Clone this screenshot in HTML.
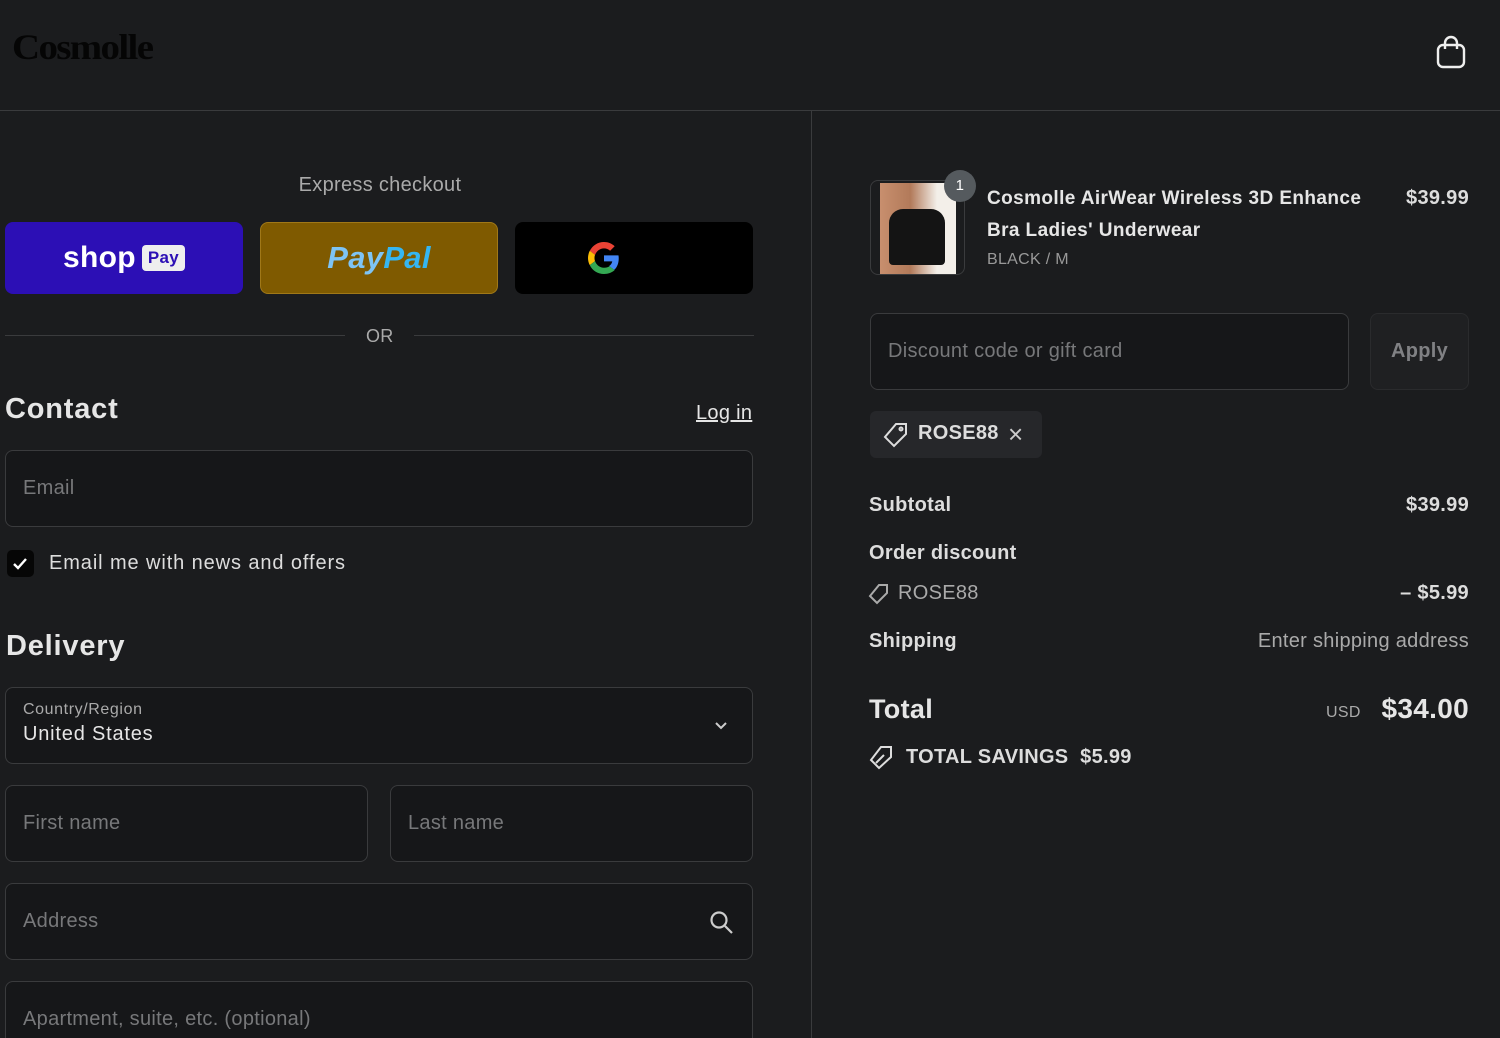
<!DOCTYPE html>
<html style="overflow:hidden;height:1038px"><head><meta charset="utf-8"><style>
*{box-sizing:border-box;margin:0;padding:0}
body{width:1500px;height:1038px;overflow:hidden;background:#1b1c1e;font-family:"Liberation Sans",sans-serif;color:#e6e6e6;position:relative;letter-spacing:.3px}
.a{position:absolute}
.r{position:absolute;right:31px;text-align:right}
.inp{position:absolute;border:1px solid #3a3b3d;border-radius:8px;background:#161719;color:#77787a;font-size:20px;padding-left:17px;display:flex;align-items:center}
.lbl{font-size:20px;color:#ddd}
</style></head><body>
<div class="a" style="left:12px;top:26px;font-family:'Liberation Serif',serif;font-weight:bold;font-size:36px;color:#050505;letter-spacing:-1.5px;transform:scaleX(1.08);transform-origin:left">Cosmolle</div>
<svg class="a" style="left:1435px;top:34px" width="32" height="36" viewBox="0 0 32 36" fill="none" stroke="#eee" stroke-width="2.4"><rect x="3" y="11" width="26" height="22" rx="5"/><path d="M10 15V9a6 6 0 0112 0v6"/></svg>
<div class="a" style="left:0;top:110px;width:1500px;height:1px;background:#3a3b3d"></div>
<div class="a" style="left:811px;top:111px;width:1px;height:927px;background:#3a3b3d"></div>

<div class="a" style="left:0;width:760px;top:174px;text-align:center;font-size:20px;color:#aaa">Express checkout</div>
<div class="a" style="left:5px;top:222px;width:238px;height:72px;background:#2c0fb5;border-radius:8px;display:flex;align-items:center;justify-content:center;gap:6px"><span style="color:#fff;font-weight:bold;font-size:30px">shop</span><span style="background:#eee;color:#2c0fb5;font-weight:bold;font-size:17px;padding:3px 6px;border-radius:4px">Pay</span></div>
<div class="a" style="left:260px;top:222px;width:238px;height:72px;background:#7f5a00;border:1px solid #a07818;border-radius:8px;display:flex;align-items:center;justify-content:center;font-style:italic;font-weight:bold;font-size:31px"><span style="color:#7ec4f5">Pay</span><span style="color:#35b6f2">Pal</span></div>
<div class="a" style="left:515px;top:222px;width:238px;height:72px;background:#000;border-radius:8px"></div>
<svg class="a" style="left:588px;top:242px" width="32" height="32" viewBox="0 0 48 48"><path fill="#EA4335" d="M24 9.5c3.5 0 6.7 1.2 9.2 3.6l6.8-6.8C35.9 2.4 30.5 0 24 0 14.6 0 6.6 5.4 2.7 13.3l7.9 6.2C12.5 13.6 17.8 9.5 24 9.5z"/><path fill="#4285F4" d="M46.1 24.5c0-1.6-.1-3.1-.4-4.5H24v9h12.4c-.5 2.9-2.2 5.4-4.7 7l7.6 5.9c4.4-4.1 6.8-10.1 6.8-17.4z"/><path fill="#FBBC05" d="M10.5 28.6c-.5-1.4-.8-3-.8-4.6s.3-3.2.8-4.6l-7.9-6.2C1 16.5 0 20.1 0 24s.9 7.5 2.7 10.700l7.8-6.1z"/><path fill="#34A853" d="M24 48c6.5 0 11.9-2.1 15.9-5.8l-7.6-5.9c-2.1 1.4-4.9 2.3-8.3 2.3-6.2 0-11.5-4.2-13.4-9.9l-7.9 6.1C6.6 42.6 14.6 48 24 48z"/></svg>
<div class="a" style="left:5px;top:335px;width:340px;height:1px;background:#3a3b3d"></div>
<div class="a" style="left:414px;top:335px;width:340px;height:1px;background:#3a3b3d"></div>
<div class="a" style="left:366px;top:326px;font-size:18px;color:#aaa">OR</div>
<div class="a" style="left:5px;top:393px;font-size:29px;font-weight:bold;letter-spacing:.8px">Contact</div>
<div class="a" style="left:696px;top:402px;font-size:20px;text-decoration:underline">Log in</div>
<div class="inp" style="left:5px;top:450px;width:748px;height:77px">Email</div>
<div class="a" style="left:7px;top:550px;width:27px;height:27px;background:#060606;border-radius:5px"><svg width="27" height="27"><path d="M7 14l4 4 8-9" stroke="#fff" stroke-width="2.4" fill="none"/></svg></div>
<div class="a lbl" style="left:49px;top:552px;letter-spacing:.9px">Email me with news and offers</div>
<div class="a" style="left:6px;top:630px;font-size:29px;font-weight:bold;letter-spacing:.8px">Delivery</div>
<div class="inp" style="left:5px;top:687px;width:748px;height:77px;display:block;padding-top:13px"><div style="font-size:16px;color:#aaa;letter-spacing:.6px">Country/Region</div><div style="font-size:20px;color:#e6e6e6;margin-top:4px;letter-spacing:.8px">United States</div></div>
<svg class="a" style="left:713px;top:719px" width="16" height="12"><path d="M3 4l5 5 5-5" stroke="#ccc" stroke-width="2" fill="none"/></svg>
<div class="inp" style="left:5px;top:785px;width:363px;height:77px">First name</div>
<div class="inp" style="left:390px;top:785px;width:363px;height:77px">Last name</div>
<div class="inp" style="left:5px;top:883px;width:748px;height:77px">Address</div>
<svg class="a" style="left:709px;top:910px" width="26" height="26" fill="none" stroke="#ccc" stroke-width="2.2"><circle cx="10" cy="10" r="7.5"/><path d="M16 16l7 7"/></svg>
<div class="inp" style="left:5px;top:981px;width:748px;height:77px">Apartment, suite, etc. (optional)</div>

<div class="a" style="left:870px;top:180px;width:95px;height:95px;border:1px solid #3a3b3d;border-radius:8px;overflow:hidden;background:#1b1c1e"><div style="position:absolute;left:9px;top:2px;width:76px;height:92px;background:linear-gradient(90deg,#c88f6e,#b27a5a 40%,#f3efe9 75%)"></div><div style="position:absolute;left:18px;top:28px;width:56px;height:56px;background:#141414;border-radius:14px 14px 4px 4px"></div></div>
<div class="a" style="left:944px;top:170px;width:32px;height:32px;border-radius:50%;background:#555a5e;color:#fff;font-size:15px;text-align:center;line-height:32px">1</div>
<div class="a lbl" style="left:987px;top:183px;line-height:32px;font-weight:bold;color:#e6e6e6;font-size:19px;letter-spacing:.4px">Cosmolle AirWear Wireless 3D Enhance<br>Bra Ladies' Underwear</div>
<div class="a" style="left:987px;top:251px;font-size:16px;color:#999">BLACK / M</div>
<div class="r lbl" style="top:187px;font-weight:bold">$39.99</div>
<div class="inp" style="left:870px;top:313px;width:479px;height:77px">Discount code or gift card</div>
<div class="a" style="left:1370px;top:313px;width:99px;height:77px;border:1px solid #2a2b2d;border-radius:8px;background:#1f2022;color:#808184;font-size:20px;font-weight:bold;display:flex;align-items:center;justify-content:center">Apply</div>
<div class="a" style="left:870px;top:411px;width:172px;height:47px;background:#26272a;border-radius:6px"></div>
<svg class="a" style="left:882px;top:421px" width="28" height="28" fill="none" stroke="#ddd" stroke-width="2"><path d="M14 3h10v10L12 25 3 16z"/><circle cx="19" cy="8" r="1.5"/></svg>
<div class="a lbl" style="left:918px;top:422px;font-weight:bold">ROSE88</div>
<div class="a" style="left:1008px;top:419px;font-size:26px;color:#ccc">×</div>
<div class="a lbl" style="left:869px;top:494px;font-weight:bold">Subtotal</div>
<div class="r lbl" style="top:494px;font-weight:bold">$39.99</div>
<div class="a lbl" style="left:869px;top:542px;font-weight:bold">Order discount</div>
<svg class="a" style="left:868px;top:583px" width="22" height="22" fill="none" stroke="#aaa" stroke-width="2"><path d="M11 2h8v8L9 20 2 13z"/></svg>
<div class="a lbl" style="left:898px;top:582px;color:#aaa">ROSE88</div>
<div class="r lbl" style="top:582px;font-weight:bold">– $5.99</div>
<div class="a lbl" style="left:869px;top:630px;font-weight:bold">Shipping</div>
<div class="r lbl" style="top:630px;color:#aaa">Enter shipping address</div>
<div class="a" style="left:869px;top:694px;font-size:27px;font-weight:bold">Total</div>
<div class="a" style="left:1326px;top:704px;font-size:16px;color:#aaa">USD</div>
<div class="r" style="top:693px;font-size:28px;font-weight:bold">$34.00</div>
<svg class="a" style="left:868px;top:744px" width="28" height="28" fill="none" stroke="#ddd" stroke-width="2"><path d="M13 3h10v10L11 24 3 16z"/><path d="M8 19l8-8"/></svg>
<div class="a lbl" style="left:906px;top:746px;font-weight:bold">TOTAL SAVINGS&nbsp; $5.99</div>
</body></html>
